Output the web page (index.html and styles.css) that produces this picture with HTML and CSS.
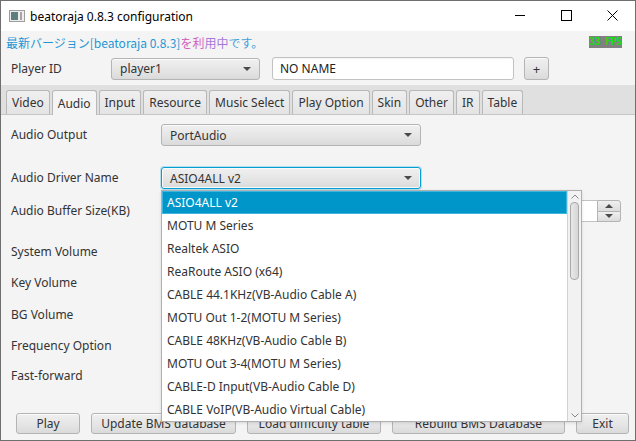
FILE: index.html
```html
<!DOCTYPE html>
<html lang="ja">
<head>
<meta charset="utf-8">
<title>beatoraja 0.8.3 configuration</title>
<link rel="stylesheet" href="styles.css">
</head>
<body>
<div class="window">
  <div class="titlebar">
    <svg class="app-icon" width="16" height="12" viewBox="0 0 16 12">
      <rect x="0.5" y="0.5" width="15" height="11" fill="#eeeeee" stroke="#9c9c9c"/>
      <rect x="2" y="2" width="7" height="8" fill="#5f7f7d"/>
      <rect x="11" y="2" width="2" height="8" fill="#a6a6a6"/>
    </svg>
    <span class="title">beatoraja 0.8.3 configuration</span>
    <div class="wincontrols">
      <span class="wc"><svg width="10" height="10" viewBox="0 0 10 10"><path d="M0 4.5H10" stroke="#000" stroke-width="1"/></svg></span>
      <span class="wc"><svg width="11" height="11" viewBox="0 0 11 11"><rect x="0.5" y="0.5" width="10" height="10" fill="none" stroke="#000" stroke-width="1"/></svg></span>
      <span class="wc"><svg width="11" height="11" viewBox="0 0 11 11"><path d="M0.5 0.5L10.5 10.5M10.5 0.5L0.5 10.5" stroke="#000" stroke-width="1"/></svg></span>
    </div>
  </div>

  <div class="client">
    <div class="notice-row">
      <span class="notice"><span class="n1">最新バージョン[beatoraja 0.8.3]</span><span class="n2">を利</span><span class="n3">用中</span><span class="n4">です。</span></span>
      <span class="fps">33 FPS</span>
    </div>

    <div class="player-row">
      <span class="player-label">Player ID</span>
      <div class="combo player-combo"><span class="combo-text">player1</span><i class="arrow"></i></div>
      <div class="textfield name-field">NO NAME</div>
      <div class="btn plus-btn">+</div>
    </div>

    <div class="tabbar">
      <div class="tab">Video</div>
      <div class="tab active">Audio</div>
      <div class="tab">Input</div>
      <div class="tab">Resource</div>
      <div class="tab">Music Select</div>
      <div class="tab">Play Option</div>
      <div class="tab">Skin</div>
      <div class="tab">Other</div>
      <div class="tab">IR</div>
      <div class="tab">Table</div>
    </div>

    <div class="tabpane">
      <div class="form">
        <span class="label">Audio Output</span>
        <div class="combo wide-combo"><span class="combo-text">PortAudio</span><i class="arrow"></i></div>

        <span class="label">Audio Driver Name</span>
        <div class="combo wide-combo focused"><span class="combo-text">ASIO4ALL v2</span><i class="arrow"></i></div>

        <span class="label">Audio Buffer Size(KB)</span>
        <div class="spinner">
          <div class="spin-field"></div>
          <div class="spin-btns">
            <div class="spin-btn"><i class="tri-up"></i></div>
            <div class="spin-btn"><i class="tri-down"></i></div>
          </div>
        </div>

        <span class="label">System Volume</span>
        <div class="empty"></div>

        <span class="label">Key Volume</span>
        <div class="empty"></div>

        <span class="label">BG Volume</span>
        <div class="empty"></div>

        <span class="label">Frequency Option</span>
        <div class="empty"></div>

        <span class="label">Fast-forward</span>
        <div class="empty"></div>
      </div>
    </div>

    <div class="buttons">
      <div class="btn b-play">Play</div>
      <div class="btn b-update">Update BMS database</div>
      <div class="btn b-load">Load difficulty table</div>
      <div class="btn b-rebuild">Rebuild BMS Database</div>
      <div class="btn b-exit">Exit</div>
    </div>
  </div>

  <div class="popup">
    <div class="list">
      <div class="item selected">ASIO4ALL v2</div>
      <div class="item">MOTU M Series</div>
      <div class="item">Realtek ASIO</div>
      <div class="item">ReaRoute ASIO (x64)</div>
      <div class="item">CABLE 44.1KHz(VB-Audio Cable A)</div>
      <div class="item">MOTU Out 1-2(MOTU M Series)</div>
      <div class="item">CABLE 48KHz(VB-Audio Cable B)</div>
      <div class="item">MOTU Out 3-4(MOTU M Series)</div>
      <div class="item">CABLE-D Input(VB-Audio Cable D)</div>
      <div class="item">CABLE VoIP(VB-Audio Virtual Cable)</div>
    </div>
    <div class="vscroll">
      <div class="sb-btn"><svg width="8" height="5" viewBox="0 0 8 5"><path d="M0.5 4.5L4 1L7.5 4.5" fill="none" stroke="#8a8a8a" stroke-width="1"/></svg></div>
      <div class="sb-track"><div class="thumb"></div></div>
      <div class="sb-btn"><svg width="8" height="5" viewBox="0 0 8 5"><path d="M0.5 0.5L4 4L7.5 0.5" fill="none" stroke="#8a8a8a" stroke-width="1"/></svg></div>
    </div>
  </div>
</div>
</body>
</html>
```
FILE: styles.css
```css
* { box-sizing: border-box; }
html, body { margin: 0; padding: 0; }
body {
  width: 636px;
  height: 441px;
  overflow: hidden;
  font-family: "Noto Sans", "Noto Sans CJK JP", sans-serif;
  font-size: 12px;
  color: #333333;
  background: #ffffff;
}

.window {
  position: relative;
  width: 636px;
  height: 441px;
  border: 1px solid #6f6f6f;
  background: #f4f4f4;
  display: flex;
  flex-direction: column;
}

/* title bar */
.titlebar {
  flex: none;
  height: 30px;
  background: #ffffff;
  display: flex;
  align-items: center;
}
.app-icon { margin-left: 8px; flex: none; }
.title {
  margin-left: 5px;
  font-family: "Noto Sans", sans-serif;
  font-size: 12px;
  color: #000000;
}
.wincontrols {
  margin-left: auto;
  display: flex;
  height: 100%;
  padding-bottom: 1px;
}
.wc {
  width: 46px;
  display: flex;
  align-items: center;
  justify-content: center;
}

/* client */
.client {
  flex: 1;
  display: flex;
  flex-direction: column;
  min-height: 0;
}

.notice-row {
  flex: none;
  height: 22px;
  display: flex;
  align-items: center;
  padding: 0 13px 0 5px;
}
.notice {
  font-family: "Noto Sans CJK JP", sans-serif;
  font-size: 12px;
}
.n1 { color: #1f97d4; }
.n2 { color: #d35fc0; }
.n3 { color: #a47ad8; }
.n4 { color: #3ea2dc; }
.fps {
  margin-left: auto;
  width: 33px;
  height: 12px;
  background: #808080;
  color: #12e012;
  font-family: "DejaVu Sans Mono", monospace;
  font-weight: bold;
  font-size: 10px;
  line-height: 12px;
  text-align: center;
  letter-spacing: -0.6px;
  white-space: nowrap;
  overflow: hidden;
}

.player-row {
  flex: none;
  display: flex;
  align-items: center;
  height: 23px;
  margin: 4px 0 5px;
  padding-left: 10px;
}
.player-label { width: 100px; }
.player-combo { width: 149px; height: 23px; }
.name-field { margin-left: 12px; width: 242px; }
.plus-btn { margin-left: 10px; width: 25px; height: 23px; font-size: 13px; }

/* controls */
.combo {
  position: relative;
  display: flex;
  align-items: center;
  height: 22px;
  padding-left: 8px;
  border: 1px solid #b4b4b4;
  border-radius: 3px;
  background: linear-gradient(#f0f0f0, #e2e2e2 70%, #dadada);
  box-shadow: inset 0 1px 0 #fbfbfb;
}
.combo.focused {
  border-color: #039ed3;
  box-shadow: 0 0 0 1px rgba(3, 158, 211, 0.25), inset 0 0 0 1px #fafafa;
}
.combo-text { flex: 1; }
.arrow {
  width: 0;
  height: 0;
  margin-right: 8px;
  border-left: 4px solid transparent;
  border-right: 4px solid transparent;
  border-top: 4px solid #4a4a4a;
}
.wide-combo { width: 260px; }

.textfield {
  height: 23px;
  display: flex;
  align-items: center;
  padding-left: 7px;
  background: #ffffff;
  border: 1px solid #c2c2c2;
  border-radius: 3px;
  box-shadow: inset 0 1px 1px rgba(0, 0, 0, 0.05);
  color: #222;
}

.btn {
  display: flex;
  align-items: center;
  justify-content: center;
  border: 1px solid #b4b4b4;
  border-radius: 3px;
  background: linear-gradient(#f0f0f0, #e2e2e2 70%, #dadada);
  box-shadow: inset 0 1px 0 #fbfbfb;
  color: #333;
}

/* tabs */
.tabbar {
  flex: none;
  height: 30px;
  display: flex;
  align-items: flex-end;
  gap: 2px;
  padding: 5px 0 0 5px;
  background: #e0e0e0;
  border-bottom: 1px solid #c6c6c6;
}
.tab {
  height: 24px;
  display: flex;
  align-items: center;
  padding: 0 5px;
  border: 1px solid #b8b8b8;
  border-bottom: none;
  border-radius: 3px 3px 0 0;
  background: linear-gradient(#efefef, #e4e4e4);
  color: #333;
}
.tab.active {
  height: 25px;
  margin-bottom: -1px;
  background: #f4f4f4;
}

.tabpane {
  flex: 1;
  min-height: 0;
}
.form {
  display: grid;
  grid-template-columns: 150px 1fr;
  grid-template-rows: 43px 33px 41px 31px 32px 31px 30px 22px;
  align-items: start;
  padding: 9px 0 0 10px;
}
.label {
  height: 22px;
  line-height: 22px;
  white-space: nowrap;
}
.empty { height: 22px; }

.spinner {
  display: flex;
  width: 460px;
  height: 22px;
}
.spin-field {
  flex: 1;
  background: #ffffff;
  border: 1px solid #c2c2c2;
  border-right: none;
  border-radius: 3px 0 0 3px;
}
.spin-btns {
  width: 24px;
  display: flex;
  flex-direction: column;
}
.spin-btn {
  flex: 1;
  display: flex;
  align-items: center;
  justify-content: center;
  border: 1px solid #b4b4b4;
  background: linear-gradient(#efefef, #dcdcdc);
}
.spin-btn:first-child { border-radius: 0 3px 0 0; }
.spin-btn:last-child { border-top: none; border-radius: 0 0 3px 0; }
.tri-up {
  width: 0; height: 0;
  border-left: 4px solid transparent;
  border-right: 4px solid transparent;
  border-bottom: 4px solid #4a4a4a;
}
.tri-down {
  width: 0; height: 0;
  border-left: 4px solid transparent;
  border-right: 4px solid transparent;
  border-top: 4px solid #4a4a4a;
}

/* bottom buttons */
.buttons {
  flex: none;
  display: flex;
  gap: 11px;
  height: 21px;
  margin-bottom: 6px;
  padding-left: 15px;
}
.buttons .btn { height: 21px; }
.b-play { width: 64px; }
.b-update { width: 145px; }
.b-load { width: 134px; }
.b-rebuild { width: 173px; }
.b-exit { width: 53px; }

/* popup list */
.popup {
  position: absolute;
  left: 160px;
  top: 189px;
  width: 421px;
  height: 232px;
  display: flex;
  background: #ffffff;
  border: 1px solid #b0b0b0;
  box-shadow: 0 1px 3px rgba(0, 0, 0, 0.12);
  z-index: 10;
}
.list {
  flex: 1;
  display: flex;
  flex-direction: column;
}
.item {
  height: 23px;
  line-height: 23px;
  padding-left: 5px;
  color: #333;
  white-space: nowrap;
}
.item.selected {
  background: #0096c9;
  color: #ffffff;
  box-shadow: inset 0 0 0 1px #3fb4de;
}
.vscroll {
  width: 14px;
  display: flex;
  flex-direction: column;
  background: #f2f2f2;
  border-left: 1px solid #d2d2d2;
}
.sb-btn {
  height: 11px;
  display: flex;
  align-items: center;
  justify-content: center;
}
.sb-track {
  flex: 1;
  padding: 0 2px;
}
.thumb {
  height: 78px;
  border: 1px solid #a9a9a9;
  border-radius: 4px;
  background: linear-gradient(to right, #e8e8e8, #d6d6d6);
}
```
